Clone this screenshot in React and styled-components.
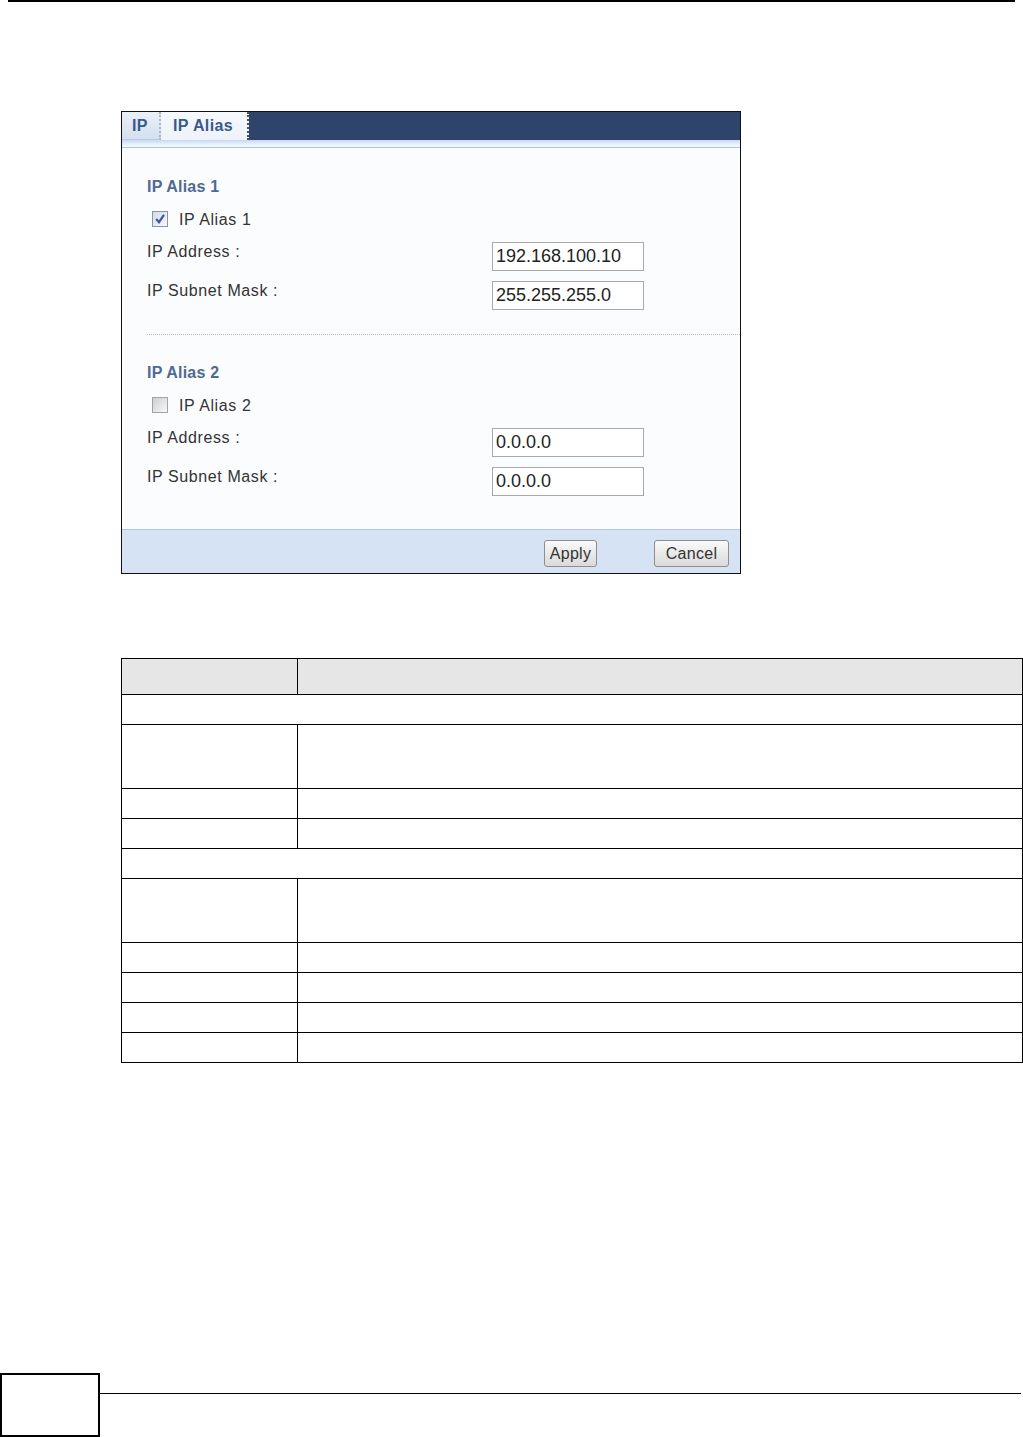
import styled, { createGlobalStyle } from "styled-components";

const GlobalStyle = createGlobalStyle`
  html, body {
    margin: 0;
    padding: 0;
    background: #fff;
  }
  body {
    font-family: "Liberation Sans", Arial, sans-serif;
  }
`;

const sections = [
  { title: "IP Alias 1", checked: true, address: "192.168.100.10", mask: "255.255.255.0" },
  { title: "IP Alias 2", checked: false, address: "0.0.0.0", mask: "0.0.0.0" },
];

// rows of the description table; span = row covers both columns, tall = two line row
const tableRows = [
  { span: true },
  { tall: true },
  {},
  {},
  { span: true },
  { tall: true },
  {},
  {},
  {},
  {},
];

const Check = ({ checked }) => (
  <CheckBox $checked={checked}>
    {checked && (
      <svg width="12" height="12" viewBox="0 0 12 12">
        <path d="M2.2 6 L5 9.2 L10 1.8" fill="none" stroke="#3b55a8" strokeWidth="2.2" />
      </svg>
    )}
  </CheckBox>
);

export default function App() {
  return (
    <>
      <GlobalStyle />
      <Page>
        <TopRule />

        <Panel>
          <TabBar>
            <Tab>IP</Tab>
            <Tab $active>IP Alias</Tab>
          </TabBar>
          <TabStrip />
          <Body>
            {sections.map((s, i) => (
              <Section key={s.title} $first={i === 0}>
                <Heading>{s.title}</Heading>
                <CheckRow>
                  <Check checked={s.checked} />
                  <Label>{s.title}</Label>
                </CheckRow>
                <FieldRow>
                  <Label>IP Address :</Label>
                  <Input defaultValue={s.address} />
                </FieldRow>
                <FieldRow>
                  <Label>IP Subnet Mask :</Label>
                  <Input defaultValue={s.mask} />
                </FieldRow>
              </Section>
            ))}
          </Body>
          <Footer>
            <Button $w={53}>Apply</Button>
            <Button $w={75}>Cancel</Button>
          </Footer>
        </Panel>

        <Table>
          <thead>
            <tr>
              <HeadCell $first />
              <HeadCell />
            </tr>
          </thead>
          <tbody>
            {tableRows.map((r, i) =>
              r.span ? (
                <tr key={i}>
                  <Cell colSpan={2} />
                </tr>
              ) : (
                <tr key={i}>
                  <Cell $first $tall={r.tall} />
                  <Cell $tall={r.tall} />
                </tr>
              )
            )}
          </tbody>
        </Table>

        <PageFooter>
          <PageNumber />
          <FooterRule />
        </PageFooter>
      </Page>
    </>
  );
}

const Page = styled.div`
  display: flex;
  flex-direction: column;
  min-height: 1437px;
  box-sizing: border-box;
`;

const TopRule = styled.div`
  height: 2px;
  margin: 0 8px 0 8px;
  background: #000;
`;

const Panel = styled.div`
  margin: 109px 0 0 121px;
  width: 620px;
  box-sizing: border-box;
  border: 1px solid #111;
  background: #fbfcfe;
`;

const TabBar = styled.div`
  display: flex;
  height: 28px;
  background: #2f446a;
`;

const Tab = styled.div`
  display: flex;
  align-items: center;
  box-sizing: border-box;
  height: 28px;
  padding: ${(p) => (p.$active ? "0 12px 0 12px" : "0 0 0 10px")};
  width: ${(p) => (p.$active ? "88px" : "39px")};
  font-size: 16px;
  font-weight: bold;
  letter-spacing: 0.4px;
  color: #3a5a8c;
  background: ${(p) =>
    p.$active
      ? "linear-gradient(#f6f9fd, #eef3fa)"
      : "linear-gradient(#eaf0f8, #d4e0ef)"};
  border-right: 2px dotted ${(p) => (p.$active ? "#4a5060" : "#a9b3c2")};
  border-bottom: ${(p) => (p.$active ? "none" : "1px solid #b8cbe6")};
`;

const TabStrip = styled.div`
  height: 7px;
  background: linear-gradient(#c4d8f2, #e6effb 55%, #f4f8fd);
  border-bottom: 1px solid #b6c4d9;
`;

const Body = styled.div`
  padding: 29px 0 33px 25px;
`;

const Section = styled.div`
  display: flex;
  flex-direction: column;
  ${(p) =>
    p.$first
      ? `
    padding-bottom: 24px;
    border-bottom: 1px dotted #bdbdbd;
  `
      : `
    padding-top: 28px;
  `}
`;

const Heading = styled.div`
  height: 20px;
  line-height: 20px;
  font-size: 16px;
  font-weight: bold;
  letter-spacing: 0.2px;
  color: #4f6a92;
`;

const CheckRow = styled.div`
  display: flex;
  align-items: center;
  gap: 11px;
  height: 20px;
  margin: 13px 0 2px 5px;
`;

const CheckBox = styled.span`
  display: flex;
  align-items: center;
  justify-content: center;
  width: 16px;
  height: 16px;
  margin-top: -2px;
  box-sizing: border-box;
  border: 1px solid ${(p) => (p.$checked ? "#8794ad" : "#a3a3a3")};
  background: ${(p) =>
    p.$checked
      ? "linear-gradient(135deg, #d5dbe6, #f7f8fb)"
      : "linear-gradient(135deg, #cfcfcf, #f8f8f8)"};
`;

const Label = styled.span`
  font-size: 16px;
  line-height: 20px;
  letter-spacing: 0.6px;
  color: #333;
`;

const FieldRow = styled.div`
  display: grid;
  grid-template-columns: 345px 152px;
  align-items: start;
  margin-top: 10px;
`;

const Input = styled.input`
  box-sizing: border-box;
  width: 152px;
  height: 29px;
  margin: 0;
  padding: 0 3px;
  border: 1px solid #a9a9a9;
  background: #fff;
  font-family: "Liberation Sans", Arial, sans-serif;
  font-size: 18px;
  color: #222;
  outline: none;
`;

const Footer = styled.div`
  display: flex;
  justify-content: flex-end;
  align-items: flex-start;
  gap: 57px;
  height: 44px;
  box-sizing: border-box;
  padding: 10px 11px 0 0;
  background: #d6e3f5;
  border-top: 1px solid #b4c8e4;
`;

const Button = styled.button`
  box-sizing: border-box;
  width: ${(p) => p.$w}px;
  height: 27px;
  padding: 0;
  border: 1px solid #8e8e8e;
  border-radius: 3px;
  background: linear-gradient(#fbfbfb, #e9e9e9 50%, #dadada);
  font-family: "Liberation Sans", Arial, sans-serif;
  font-size: 16px;
  letter-spacing: 0.3px;
  color: #333;
`;

const Table = styled.table`
  margin: 84px 0 0 121px;
  width: 902px;
  border-collapse: collapse;
  table-layout: fixed;
`;

const HeadCell = styled.th`
  height: 35px;
  padding: 0;
  border: 1px solid #000;
  background: #e6e6e6;
  width: ${(p) => (p.$first ? "175px" : "auto")};
`;

const Cell = styled.td`
  height: ${(p) => (p.$tall ? "63px" : "29px")};
  padding: 0;
  border: 1px solid #000;
`;

const PageFooter = styled.div`
  display: flex;
  margin-top: auto;
`;

const PageNumber = styled.div`
  width: 100px;
  height: 64px;
  box-sizing: border-box;
  border: 2px solid #000;
`;

const FooterRule = styled.div`
  flex: 1;
  height: 1px;
  margin: 20px 2px 0 0;
  background: #000;
`;
